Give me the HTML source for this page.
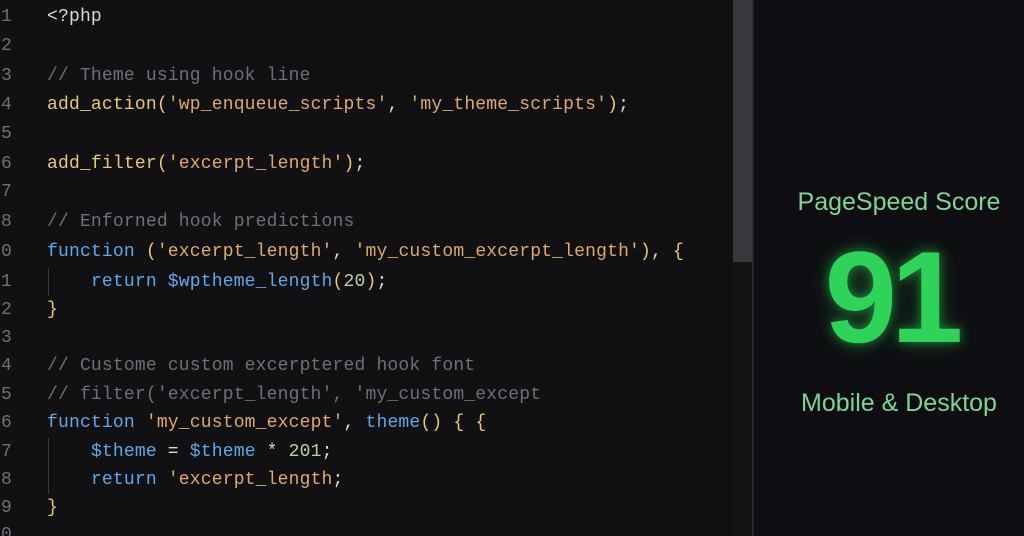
<!DOCTYPE html>
<html style="overflow:hidden;height:536px"><head><style>
body{margin:0;width:1024px;height:536px;overflow:hidden;background:#111114;position:relative;font-family:"Liberation Mono",monospace}
.l{position:absolute;left:0;height:29px;line-height:29px;font-size:18px;letter-spacing:0.18px;white-space:pre;color:#d4d4d4}
.n{position:absolute;right:-12px;color:#6e7076;width:40px;text-align:right}
.c{position:absolute;left:47px}
.cm{color:#6c7077}.y{color:#e8c77a}.s{color:#e0a86a}.b{color:#5ea8e6}.g{color:#b5d3a5}.w{color:#d8d8d8}
.guide{position:absolute;left:48px;width:1px;background:#3a3a3e}
#sb{position:absolute;left:733px;top:0;width:19px;height:536px;background:#141417}
#th{position:absolute;left:733px;top:0;width:19px;height:262px;background:#38383c}
#dv{position:absolute;left:752px;top:0;width:2px;height:536px;background:#2a2a2e}
#right{position:absolute;left:754px;top:0;width:270px;height:536px;background:#0e0e12;font-family:"Liberation Sans",sans-serif;text-align:center}
.t{position:absolute;left:0;width:290px;font-size:25px;color:#7ed492}
.big{position:absolute;left:-8px;width:290px;top:222px;font-size:130px;font-weight:bold;color:#2fd35a;text-shadow:0 0 10px rgba(47,211,90,.55),0 0 24px rgba(47,211,90,.3);letter-spacing:-6px;line-height:150px}
</style></head><body>
<div class="l" style="top:3px"><span class="n">1</span><span class="c w">&lt;?php</span></div>
<div class="l" style="top:32px"><span class="n">2</span></div>
<div class="l" style="top:62px"><span class="n">3</span><span class="c cm">// Theme using hook line</span></div>
<div class="l" style="top:91px"><span class="n">4</span><span class="c"><span class="y">add_action(</span><span class="s">'wp_enqueue_scripts'</span><span class="w">, </span><span class="s">'my_theme_scripts'</span><span class="y">)</span><span class="w">;</span></span></div>
<div class="l" style="top:120px"><span class="n">5</span></div>
<div class="l" style="top:150px"><span class="n">6</span><span class="c"><span class="y">add_filter(</span><span class="s">'excerpt_length'</span><span class="y">)</span><span class="w">;</span></span></div>
<div class="l" style="top:178px"><span class="n">7</span></div>
<div class="l" style="top:208px"><span class="n">8</span><span class="c cm">// Enforned hook predictions</span></div>
<div class="l" style="top:238px"><span class="n">10</span><span class="c"><span class="b">function</span> <span class="y">(</span><span class="s">'excerpt_length'</span><span class="w">, </span><span class="s">'my_custom_excerpt_length'</span><span class="y">)</span><span class="w">, </span><span class="y">{</span></span></div>
<div class="l" style="top:268px"><span class="n">11</span><span class="c">    <span class="b">return $wptheme_length</span><span class="y">(</span><span class="g">20</span><span class="y">)</span><span class="w">;</span></span></div>
<div class="l" style="top:296px"><span class="n">12</span><span class="c y">}</span></div>
<div class="l" style="top:324px"><span class="n">13</span></div>
<div class="l" style="top:352px"><span class="n">14</span><span class="c cm">// Custome custom excerptered hook font</span></div>
<div class="l" style="top:381px"><span class="n">15</span><span class="c cm">// filter('excerpt_length', 'my_custom_except</span></div>
<div class="l" style="top:409px"><span class="n">16</span><span class="c"><span class="b">function</span> <span class="s">'my_custom_except'</span><span class="w">, </span><span class="b">theme</span><span class="y">() { {</span></span></div>
<div class="l" style="top:438px"><span class="n">17</span><span class="c">    <span class="b">$theme</span><span class="w"> = </span><span class="b">$theme</span><span class="w"> * </span><span class="g">201</span><span class="w">;</span></span></div>
<div class="l" style="top:466px"><span class="n">18</span><span class="c">    <span class="b">return</span> <span class="s">'excerpt_length</span><span class="w">;</span></span></div>
<div class="l" style="top:494px"><span class="n">19</span><span class="c y">}</span></div>
<div class="l" style="top:521px"><span class="n">20</span></div>
<div class="guide" style="top:268px;height:28px"></div>
<div class="guide" style="top:438px;height:56px"></div>
<div id="sb"></div><div id="th"></div><div id="dv"></div>
<div id="right">
<div class="t" style="top:188px">PageSpeed Score</div>
<div class="big">91</div>
<div class="t" style="top:389px">Mobile &amp; Desktop</div>
</div>
</body></html>
